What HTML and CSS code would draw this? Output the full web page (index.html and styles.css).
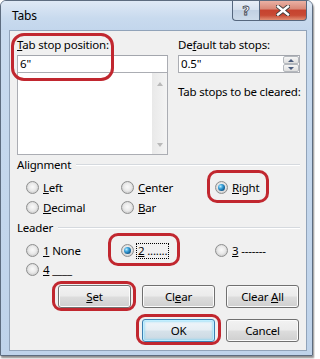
FILE: index.html
```html
<!DOCTYPE html>
<html>
<head>
<meta charset="utf-8">
<link rel="stylesheet" href="styles.css">
</head>
<body>
<div class="window">
  <div class="titlebar">
    <span class="title">Tabs</span>
    <div class="caps">
      <div class="cap help"><span class="q">?</span></div>
      <div class="cap close">
        <svg width="14" height="11" viewBox="0 0 14 11">
          <path d="M2 1.5 L12 9.5 M12 1.5 L2 9.5" stroke="#3b3b3b" stroke-width="4.2" stroke-linecap="square" fill="none"/>
          <path d="M2 1.5 L12 9.5 M12 1.5 L2 9.5" stroke="#ffffff" stroke-width="2.4" stroke-linecap="square" fill="none"/>
        </svg>
      </div>
    </div>
  </div>
  <div class="client">
    <div class="top">
      <div class="col col-left">
        <div class="lbl"><u>T</u>ab stop position:</div>
        <div class="edit">6"</div>
        <div class="list">
          <div class="sbar">
            <span class="sarrow up"></span>
            <span class="sarrow down"></span>
          </div>
        </div>
      </div>
      <div class="col col-right">
        <div class="lbl">De<u>f</u>ault tab stops:</div>
        <div class="edit spin">
          <span class="val">0.5"</span>
          <div class="spinbtns">
            <span class="sbtn"><span class="tri up"></span></span>
            <span class="sbtn"><span class="tri down"></span></span>
          </div>
        </div>
        <div class="lbl cleared">Tab stops to be cleared:</div>
      </div>
    </div>

    <div class="gt gt-align">Alignment</div>
    <div class="radios align">
      <div class="radio"><span class="rb"></span><span><u>L</u>eft</span></div>
      <div class="radio"><span class="rb"></span><span><u>C</u>enter</span></div>
      <div class="radio"><span class="rb on"></span><span><u>R</u>ight</span></div>
      <div class="radio"><span class="rb"></span><span><u>D</u>ecimal</span></div>
      <div class="radio"><span class="rb"></span><span><u>B</u>ar</span></div>
    </div>

    <div class="gt gt-leader">Leader</div>
    <div class="radios leader">
      <div class="radio"><span class="rb"></span><span><u>1</u> None</span></div>
      <div class="radio"><span class="rb on"></span><span class="focus"><u>2</u> .......</span></div>
      <div class="radio"><span class="rb"></span><span><u>3</u> -------</span></div>
      <div class="radio"><span class="rb"></span><span><u>4</u> ____</span></div>
    </div>

    <div class="btnrow first">
      <div class="btn"><span><u>S</u>et</span></div>
      <div class="btn"><span>Cl<u>e</u>ar</span></div>
      <div class="btn"><span>Clear <u>A</u>ll</span></div>
    </div>
    <div class="btnrow second">
      <div class="btn default"><span>OK</span></div>
      <div class="btn"><span>Cancel</span></div>
    </div>
  </div>

  <div class="mark m1"></div>
  <div class="mark m2"></div>
  <div class="mark m3"></div>
  <div class="mark m4"></div>
  <div class="mark m5"></div>
</div>
</body>
</html>
```

FILE: styles.css
```css
* { box-sizing: border-box; }
html, body { margin: 0; padding: 0; }
body {
  width: 315px;
  height: 359px;
  overflow: hidden;
  background: #ffffff;
  font-family: "Segoe UI", "Noto Sans", sans-serif;
  font-size: 11.5px;
  letter-spacing: -0.2px;
  color: #000;
}
u { text-decoration: underline; text-underline-offset: 1px; }

.window {
  position: relative;
  width: 313px;
  height: 356px;
  border: 1px solid #5d6c7f;
  border-radius: 6px 6px 0 0;
  background: linear-gradient(#c9dbef, #bfd3ea);
  display: flex;
  flex-direction: column;
  box-shadow: 1px 2px 2px rgba(0,0,0,0.45);
}

.titlebar {
  height: 29px;
  flex: none;
  display: flex;
  align-items: flex-start;
  padding-left: 11px;
  border-radius: 5px 5px 0 0;
  background: linear-gradient(#dfe9f5, #c8daee 60%, #c3d6ec);
}
.title { line-height: 16px; margin-top: 7px; color: #000; font-size: 12px; }
.caps { margin-left: auto; margin-right: 5px; display: flex; }
.cap {
  height: 20px;
  border: 1px solid #56677e;
  border-top: none;
  display: flex;
  align-items: center;
  justify-content: center;
}
.help {
  width: 27px;
  border-right: none;
  border-radius: 0 0 0 4px;
  background: linear-gradient(#e8eef6 0%, #d6e1ee 45%, #c2d1e3 50%, #cddbea 100%);
}
.q {
  font-family: "DejaVu Sans", sans-serif;
  font-weight: bold;
  font-size: 13px;
  line-height: 13px;
  letter-spacing: 0;
  color: #ffffff;
  -webkit-text-stroke: 0.8px #3e4652;
}
.close {
  width: 48px;
  border-radius: 0 0 4px 0;
  background: linear-gradient(#eab1a4 0%, #d98a79 40%, #c6432f 50%, #c84a34 75%, #e08e74 100%);
}

.client {
  flex: 1;
  margin: 0 5px 4px 8px;
  border: 1px solid #91a3b9;
  background: #f0f0f0;
  padding: 6px 6px 0 7px;
  display: flex;
  flex-direction: column;
}

.top { display: flex; gap: 10px; }
.col { display: flex; flex-direction: column; }
.col-left { width: 151px; }
.col-right { width: 122px; }
.lbl { line-height: 16px; white-space: nowrap; }
.edit {
  margin-top: 2px;
  height: 18px;
  border: 1px solid #abadb3;
  border-top-color: #a3a6ad;
  background: #fff;
  padding-left: 2px;
  line-height: 16px;
  display: flex;
  align-items: center;
}
.list {
  height: 82px;
  border: 1px solid #abadb3;
  border-top: none;
  background: #fff;
  display: flex;
  justify-content: flex-end;
}
.sbar {
  width: 15px;
  height: 100%;
  background: linear-gradient(to right, #e9e9e9, #f4f4f4);
  display: flex;
  flex-direction: column;
  justify-content: space-between;
  align-items: center;
  padding: 9px 0 7px;
}
.sarrow { width: 0; height: 0; border-left: 3.5px solid transparent; border-right: 3.5px solid transparent; }
.sarrow.up { border-bottom: 4px solid #b9b9b9; }
.sarrow.down { border-top: 4px solid #b9b9b9; }

.spin { padding-right: 0; justify-content: space-between; }
.spinbtns {
  display: flex;
  flex-direction: column;
  width: 16px;
  height: 16px;
}
.sbtn {
  flex: 1;
  border: 1px solid #b4b8bd;
  border-radius: 2px;
  background: linear-gradient(#f6f6f6, #dedede);
  display: flex;
  align-items: center;
  justify-content: center;
}
.tri { width: 0; height: 0; border-left: 3px solid transparent; border-right: 3px solid transparent; }
.tri.up { border-bottom: 3px solid #4a5c7d; }
.tri.down { border-top: 3px solid #4a5c7d; }
.cleared { margin-top: 11px; }

.gt {
  display: flex;
  align-items: center;
  line-height: 16px;
}
.gt::after {
  content: "";
  flex: 1;
  margin-left: 5px;
  border-top: 1px solid #d5d9de;
  border-bottom: 1px solid #ffffff;
}
.gt-align { margin-top: 2px; }
.gt-leader { margin-top: 3px; }

.radios {
  display: grid;
  grid-template-columns: 95px 94px auto;
  margin-left: 9px;
}
.radios.align { margin-top: 4px; grid-auto-rows: 20px; }
.radios.leader { margin-top: 5px; grid-auto-rows: 19px; }
.radio { display: flex; align-items: center; white-space: nowrap; }
.rb {
  position: relative;
  width: 13px;
  height: 13px;
  flex: none;
  border-radius: 50%;
  border: 1px solid #8e8f8f;
  background: radial-gradient(circle at 50% 45%, #fafafa 0%, #eaeaea 45%, #cfcfcf 75%, #e2e2e2 100%);
  margin-right: 4px;
}
.rb.on::after {
  content: "";
  position: absolute;
  left: 2px;
  top: 2px;
  width: 7px;
  height: 7px;
  border-radius: 50%;
  background: radial-gradient(circle at 35% 35%, #b9ecff 0%, #3aa0d8 35%, #125d92 70%, #0c3f66 100%);
}
.focus {
  border: 1px dotted #000;
  padding: 0 1px;
  margin-left: -2px;
  line-height: 14px;
}

.btnrow {
  display: flex;
  justify-content: flex-end;
  gap: 11px;
  margin-right: 1px;
}
.btnrow.first { margin-top: 6px; }
.btnrow.second { margin-top: 11px; }
.btn {
  width: 73px;
  height: 23px;
  border: 1px solid #707070;
  border-radius: 3px;
  background: linear-gradient(#f2f2f2 0%, #ebebeb 48%, #dddddd 52%, #cfcfcf 100%);
  box-shadow: inset 0 0 0 1px #fbfbfb;
  display: flex;
  align-items: center;
  justify-content: center;
  white-space: nowrap;
}
.btn.default {
  border-color: #3c7fb1;
  box-shadow: inset 0 0 0 1px #bfeeff, inset 0 0 2px 2px rgba(120, 214, 248, 0.55);
  background: linear-gradient(#f1f6fa 0%, #e6eef4 48%, #d6e2ea 52%, #cad8e2 100%);
}

.mark {
  position: absolute;
  border: 3px solid #c1272f;
  border-radius: 11px;
  pointer-events: none;
}
.m1 { left: 10px; top: 32px; width: 103px; height: 48px; border-radius: 13px; }
.m2 { left: 206px; top: 169px; width: 62px; height: 33px; border-radius: 10px; }
.m3 { left: 107px; top: 232px; width: 72px; height: 33px; border-radius: 10px; }
.m4 { left: 51px; top: 280px; width: 84px; height: 30px; border-radius: 9px; }
.m5 { left: 135px; top: 313px; width: 85px; height: 31px; border-radius: 9px; }
```
